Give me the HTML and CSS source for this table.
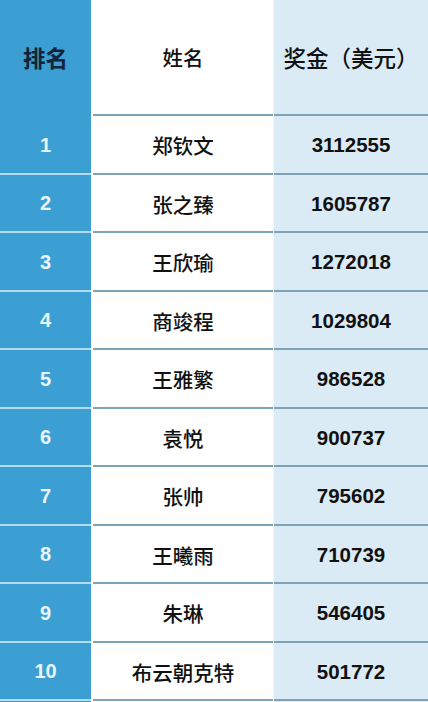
FILE: index.html
```html
<!DOCTYPE html>
<html lang="zh">
<head>
<meta charset="utf-8">
<link rel="stylesheet" href="styles.css">
</head>
<body>
<div class="table">
  <div class="col col-rank">
    <div class="cell head">排名</div>
    <div class="cell">1</div>
    <div class="cell">2</div>
    <div class="cell">3</div>
    <div class="cell">4</div>
    <div class="cell">5</div>
    <div class="cell">6</div>
    <div class="cell">7</div>
    <div class="cell">8</div>
    <div class="cell">9</div>
    <div class="cell">10</div>
  </div>
  <div class="col col-name">
    <div class="cell head">姓名</div>
    <div class="cell">郑钦文</div>
    <div class="cell">张之臻</div>
    <div class="cell">王欣瑜</div>
    <div class="cell">商竣程</div>
    <div class="cell">王雅繁</div>
    <div class="cell">袁悦</div>
    <div class="cell">张帅</div>
    <div class="cell">王曦雨</div>
    <div class="cell">朱琳</div>
    <div class="cell">布云朝克特</div>
  </div>
  <div class="col col-prize">
    <div class="cell head">奖金（美元）</div>
    <div class="cell">3112555</div>
    <div class="cell">1605787</div>
    <div class="cell">1272018</div>
    <div class="cell">1029804</div>
    <div class="cell">986528</div>
    <div class="cell">900737</div>
    <div class="cell">795602</div>
    <div class="cell">710739</div>
    <div class="cell">546405</div>
    <div class="cell">501772</div>
  </div>
</div>
</body>
</html>
```
FILE: styles.css
```css
html, body {
  margin: 0;
  padding: 0;
  background: #ffffff;
}
.table {
  display: flex;
  width: 428px;
  height: 702px;
}
.col {
  display: flex;
  flex-direction: column;
}
.cell {
  box-sizing: border-box;
  height: 58.5px;
  display: flex;
  align-items: center;
  justify-content: center;
  border-bottom: 2px solid #7ea3b7;
  padding-top: 2px;
}
.cell.head {
  height: 116px;
  padding-top: 0;
  font-family: "Noto Sans CJK SC", "Noto Sans", sans-serif;
  font-size: 22.5px;
  font-weight: 500;
  color: #111111;
}
.col-rank {
  width: 91px;
  margin-right: 2px;
  background: #3c9fd3;
}
.col-rank .cell {
  border-bottom-color: #b3dcf0;
  font-family: "Liberation Sans", Arial, sans-serif;
  font-weight: bold;
  font-size: 20px;
  color: #e8f5fc;
}
.col-rank .cell.head {
  border-bottom-color: #3c9fd3;
  font-family: "Noto Sans CJK SC", sans-serif;
  font-weight: bold;
  font-size: 22.5px;
  color: #14233a;
}
.col-name {
  width: 180px;
  border-right: 1px solid #f4f9fc;
  background: #ffffff;
}
.col-name .cell {
  font-family: "Noto Sans CJK SC", sans-serif;
  font-size: 20.5px;
  font-weight: 500;
  color: #111111;
}
.col-prize {
  flex: 1;
  background: #dbebf6;
}
.col-prize .cell {
  font-family: "Liberation Sans", Arial, sans-serif;
  font-weight: bold;
  font-size: 20.5px;
  color: #111111;
}
.col-prize .cell.head {
  font-family: "Noto Sans CJK SC", sans-serif;
  font-weight: 500;
  font-size: 22.5px;
}
```
